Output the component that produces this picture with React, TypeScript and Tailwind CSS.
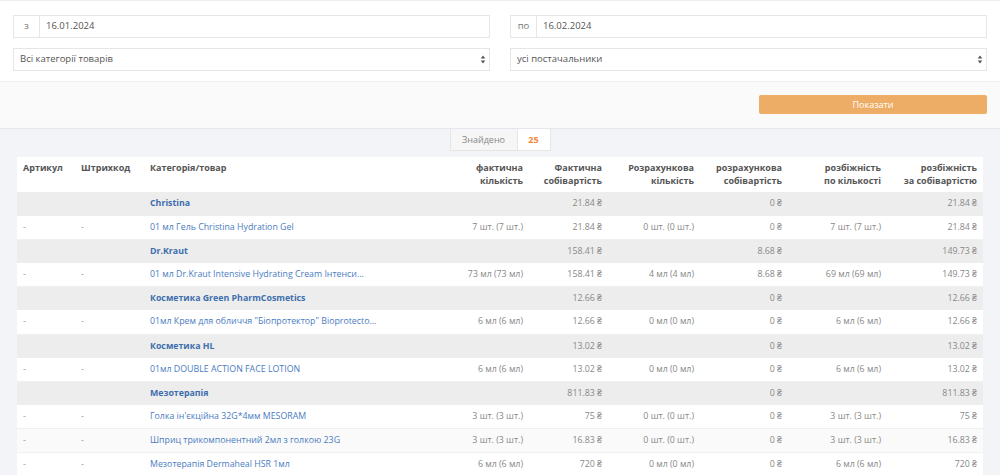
import React from 'react';

type Row =
  | { kind: 'group'; name: string; factCost: string; calcCost: string; diffCost: string }
  | {
      kind: 'item';
      name: string;
      factQty: string;
      factCost: string;
      calcQty: string;
      calcCost: string;
      diffQty: string;
      diffCost: string;
      striped?: boolean;
    };

const rows: Row[] = [
  { kind: 'group', name: 'Christina', factCost: '21.84 ₴', calcCost: '0 ₴', diffCost: '21.84 ₴' },
  { kind: 'item', name: '01 мл Гель Christina Hydration Gel', factQty: '7 шт. (7 шт.)', factCost: '21.84 ₴', calcQty: '0 шт. (0 шт.)', calcCost: '0 ₴', diffQty: '7 шт. (7 шт.)', diffCost: '21.84 ₴' },
  { kind: 'group', name: 'Dr.Kraut', factCost: '158.41 ₴', calcCost: '8.68 ₴', diffCost: '149.73 ₴' },
  { kind: 'item', name: '01 мл Dr.Kraut Intensive Hydrating Cream Інтенси...', factQty: '73 мл (73 мл)', factCost: '158.41 ₴', calcQty: '4 мл (4 мл)', calcCost: '8.68 ₴', diffQty: '69 мл (69 мл)', diffCost: '149.73 ₴' },
  { kind: 'group', name: 'Косметика Green PharmCosmetics', factCost: '12.66 ₴', calcCost: '0 ₴', diffCost: '12.66 ₴' },
  { kind: 'item', name: '01мл Крем для обличчя "Біопротектор" Bioprotecto...', factQty: '6 мл (6 мл)', factCost: '12.66 ₴', calcQty: '0 мл (0 мл)', calcCost: '0 ₴', diffQty: '6 мл (6 мл)', diffCost: '12.66 ₴' },
  { kind: 'group', name: 'Косметика HL', factCost: '13.02 ₴', calcCost: '0 ₴', diffCost: '13.02 ₴' },
  { kind: 'item', name: '01мл DOUBLE ACTION FACE LOTION', factQty: '6 мл (6 мл)', factCost: '13.02 ₴', calcQty: '0 мл (0 мл)', calcCost: '0 ₴', diffQty: '6 мл (6 мл)', diffCost: '13.02 ₴' },
  { kind: 'group', name: 'Мезотерапія', factCost: '811.83 ₴', calcCost: '0 ₴', diffCost: '811.83 ₴' },
  { kind: 'item', name: 'Голка ін\'єкційна 32G*4мм MESORAM', factQty: '3 шт. (3 шт.)', factCost: '75 ₴', calcQty: '0 шт. (0 шт.)', calcCost: '0 ₴', diffQty: '3 шт. (3 шт.)', diffCost: '75 ₴' },
  { kind: 'item', name: 'Шприц трикомпонентний 2мл з голкою 23G', factQty: '3 шт. (3 шт.)', factCost: '16.83 ₴', calcQty: '0 шт. (0 шт.)', calcCost: '0 ₴', diffQty: '3 шт. (3 шт.)', diffCost: '16.83 ₴', striped: true },
  { kind: 'item', name: 'Мезотерапія Dermaheal HSR 1мл', factQty: '6 мл (6 мл)', factCost: '720 ₴', calcQty: '0 мл (0 мл)', calcCost: '0 ₴', diffQty: '6 мл (6 мл)', diffCost: '720 ₴' },
];

function SortArrows() {
  return (
    <svg className="w-[6px] h-[9px] text-[#555]" viewBox="0 0 6 10" fill="currentColor">
      <path d="M3 0.5L5.5 4H0.5z" />
      <path d="M3 9.5L0.5 6h5z" />
    </svg>
  );
}

function DateInput({ prefix, value }: { prefix: string; value: string }) {
  return (
    <div className="flex h-[23px] border border-[#e6e6e6] bg-white">
      <div className="w-[26px] flex items-center justify-center border-r border-[#e6e6e6] text-[#777]">{prefix}</div>
      <div className="flex-1 flex items-center pl-[6px] text-[#555]">{value}</div>
    </div>
  );
}

function SelectBox({ value }: { value: string }) {
  return (
    <div className="flex h-[23px] items-center justify-between border border-[#e6e6e6] bg-white pl-[6px] pr-[3px] text-[#555]">
      <span>{value}</span>
      <SortArrows />
    </div>
  );
}

export default function App() {
  const th = 'px-[6px] pt-[4px] pb-[5px] align-top font-bold text-[#555] leading-[13px]';
  const td = 'px-[6px] h-[23.7px] whitespace-nowrap';
  return (
    <div className="min-h-[475px] bg-[#f3f4f8] text-[9.5px]" style={{ fontFamily: '"Open Sans", "Liberation Sans", sans-serif' }}>
      {/* filters */}
      <div className="bg-white border-t border-[#eeeeee] pt-[14px] pb-[10px] px-[13px]">
        <div className="grid grid-cols-2 gap-x-[20px] gap-y-[10px]">
          <DateInput prefix="з" value="16.01.2024" />
          <DateInput prefix="по" value="16.02.2024" />
          <SelectBox value="Всі категорії товарів" />
          <SelectBox value="усі постачальники" />
        </div>
      </div>
      <div className="bg-[#fafafa] border-t border-[#f0f0f0] border-b border-b-[#e6e7ee] h-[48px] flex items-start justify-end pt-[13px] pr-[13px]">
        <button className="w-[228px] h-[19px] rounded-[2px] bg-[#eead66] text-white text-[9px]">Показати</button>
      </div>

      {/* found */}
      <div className="flex justify-center">
        <div className="flex h-[22px] border border-t-0 border-[#e6e6e6] text-[9px]">
          <div className="w-[67px] flex items-center justify-center bg-[#f6f6f6] border-r border-[#e6e6e6] text-[#888]">Знайдено</div>
          <div className="w-[32px] flex items-center justify-center bg-white font-bold text-[#f0883a]">25</div>
        </div>
      </div>

      {/* table */}
      <div className="pt-[6px] px-[17px]">
        <table className="w-full table-fixed border-collapse bg-white text-[9px]">
          <colgroup>
            <col className="w-[58px]" />
            <col className="w-[69px]" />
            <col className="w-[316px]" />
            <col className="w-[69px]" />
            <col className="w-[79px]" />
            <col className="w-[92px]" />
            <col className="w-[88px]" />
            <col className="w-[99px]" />
            <col className="w-[96px]" />
          </colgroup>
          <thead>
            <tr className="h-[35px]">
              <th className={`${th} text-left`}>Артикул</th>
              <th className={`${th} text-left`}>Штрихкод</th>
              <th className={`${th} text-left`}>Категорія/товар</th>
              <th className={`${th} text-right`}>фактична<br />кількість</th>
              <th className={`${th} text-right`}>Фактична<br />собівартість</th>
              <th className={`${th} text-right`}>Розрахункова<br />кількість</th>
              <th className={`${th} text-right`}>розрахункова<br />собівартість</th>
              <th className={`${th} text-right`}>розбіжність<br />по кількості</th>
              <th className={`${th} text-right`}>розбіжність<br />за собівартістю</th>
            </tr>
          </thead>
          <tbody className="text-[8.8px]">
            {rows.map((r, i) =>
              r.kind === 'group' ? (
                <tr key={i} className="bg-[#ededed] text-[#888]">
                  <td className={td}></td>
                  <td className={td}></td>
                  <td className={`${td} font-bold text-[#3d6fae]`}>{r.name}</td>
                  <td className={td}></td>
                  <td className={`${td} text-right`}>{r.factCost}</td>
                  <td className={td}></td>
                  <td className={`${td} text-right`}>{r.calcCost}</td>
                  <td className={td}></td>
                  <td className={`${td} text-right`}>{r.diffCost}</td>
                </tr>
              ) : (
                <tr key={i} className={`${r.striped ? 'bg-[#fafafa]' : 'bg-white'} border-b border-[#f0f0f0] text-[#888]`}>
                  <td className={`${td} text-[#999]`}>-</td>
                  <td className={`${td} text-[#999]`}>-</td>
                  <td className={`${td} text-[#4a7cbf]`}>{r.name}</td>
                  <td className={`${td} text-right`}>{r.factQty}</td>
                  <td className={`${td} text-right`}>{r.factCost}</td>
                  <td className={`${td} text-right`}>{r.calcQty}</td>
                  <td className={`${td} text-right`}>{r.calcCost}</td>
                  <td className={`${td} text-right`}>{r.diffQty}</td>
                  <td className={`${td} text-right`}>{r.diffCost}</td>
                </tr>
              )
            )}
          </tbody>
        </table>
      </div>
    </div>
  );
}
